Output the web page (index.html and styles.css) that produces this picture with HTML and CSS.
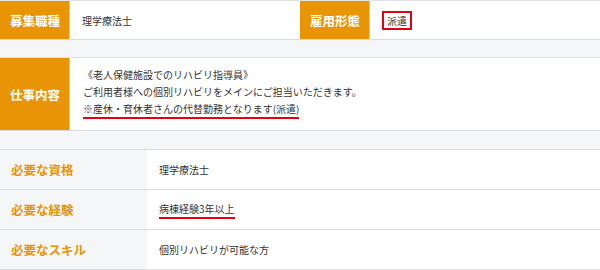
FILE: index.html
```html
<!DOCTYPE html>
<html lang="ja">
<head>
<meta charset="utf-8">
<link rel="stylesheet" href="styles.css">
</head>
<body>
<div class="page">
  <section class="box top">
    <div class="pair">
      <div class="olabel">募集職種</div>
      <div class="oval">理学療法士</div>
    </div>
    <div class="pair">
      <div class="olabel">雇用形態</div>
      <div class="oval"><span class="redbox">派遣</span></div>
    </div>
  </section>

  <section class="box job">
    <div class="olabel">仕事内容</div>
    <div class="jobtext">
      <p>《老人保健施設でのリハビリ指導員》</p>
      <p>ご利用者様への個別リハビリをメインにご担当いただきます。</p>
      <p><span class="uline">※産休・育休者さんの代替勤務となります(派遣)</span></p>
    </div>
  </section>

  <section class="req">
    <div class="row">
      <div class="rlabel">必要な資格</div>
      <div class="rval">理学療法士</div>
    </div>
    <div class="row">
      <div class="rlabel">必要な経験</div>
      <div class="rval"><span class="uline">病棟経験3年以上</span></div>
    </div>
    <div class="row">
      <div class="rlabel">必要なスキル</div>
      <div class="rval">個別リハビリが可能な方</div>
    </div>
  </section>
</div>
</body>
</html>
```

FILE: styles.css
```css
* { box-sizing: border-box; margin: 0; padding: 0; }
html, body { background: #f5f6f8; }
body {
  font-family: "Noto Sans CJK JP", "Noto Sans", sans-serif;
  color: #333;
  width: 600px;
  height: 270px;
  overflow: hidden;
}
.box {
  background: #fff;
  border-top: 1px solid #e2e2e2;
  border-bottom: 1px solid #dcdcdc;
  display: flex;
}
.top { height: 40px; }
.pair { display: flex; width: 300px; }
.olabel {
  width: 70px;
  flex: none;
  background: #e99404;
  color: #fff;
  font-weight: 700;
  font-size: 12.5px;
  display: flex;
  align-items: center;
  padding-left: 10px;
  border-right: 1px solid #f3c27a;
}
.oval {
  display: flex;
  align-items: center;
  padding-left: 12px;
  font-size: 10px;
}
.redbox {
  border: 2px solid #e60012;
  padding: 1px 3px;
  line-height: 13px;
}
.job {
  margin-top: 17px;
  height: 74px;
}
.jobtext {
  padding: 8px 0 0 13px;
  font-size: 10px;
  line-height: 17px;
}
.uline {
  border-bottom: 2px solid #e60012;
  padding-bottom: 1px;
}
.req {
  margin-top: 18px;
  border-top: 1px solid #dcdcdc;
}
.row {
  display: flex;
  height: 40px;
  border-bottom: 1px solid #dedede;
  background: #fff;
}
.rlabel {
  width: 147px;
  background: #f5f6f8;
  color: #e99404;
  font-weight: 700;
  font-size: 12.5px;
  display: flex;
  align-items: center;
  padding-left: 11px;
}
.rval {
  display: flex;
  align-items: center;
  padding-left: 12px;
  font-size: 10px;
}
```
